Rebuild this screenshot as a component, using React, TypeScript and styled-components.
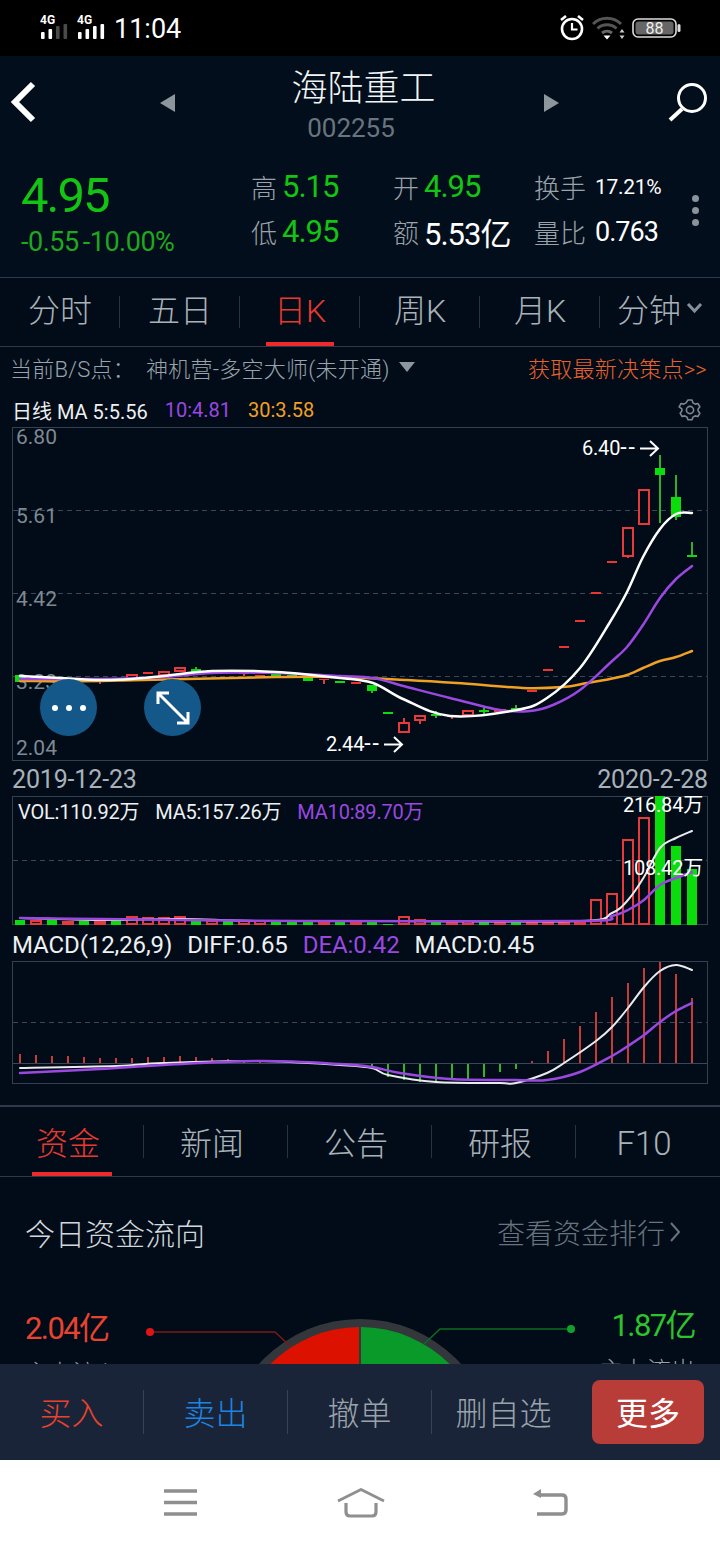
import React from 'react';
import styled, { createGlobalStyle } from 'styled-components';

const RED = '#e8392f';
const GREEN = '#14c414';
const PURPLE = '#9a48e0';
const ORANGE = '#f0a022';
const LINE = '#2e3a49';

const GlobalStyle = createGlobalStyle`
  html, body { margin: 0; padding: 0; background: #010c18; }
  * { box-sizing: border-box; }
  body { font-family: Roboto, "Noto Sans CJK SC", sans-serif; }
`;

const Page = styled.div`
  width: 720px;
  height: 1544px;
  display: flex;
  flex-direction: column;
  overflow: hidden;
  background: #010c18;
`;

/* status bar */
const StatusBar = styled.div`
  height: 56px;
  flex: none;
  background: #000;
  display: flex;
  align-items: center;
  justify-content: space-between;
  padding: 0 39px 0 40px;
  color: #fff;
`;
const StatusGroup = styled.div`
  display: flex;
  align-items: center;
  gap: 7px;
`;
const Clock = styled.span`
  font-size: 27px;
  padding-top: 1px;
`;

/* header */
const Header = styled.div`
  height: 86px;
  flex: none;
  display: flex;
  align-items: center;
  padding-top: 6px;
  background: #020e1b;
`;
const BackSlot = styled.div`
  width: 160px;
  padding-left: 9px;
  display: flex;
`;
const SearchSlot = styled.div`
  width: 160px;
  padding-right: 12px;
  display: flex;
  justify-content: flex-end;
`;
const TitleBlock = styled.div`
  flex: 1;
  display: flex;
  flex-direction: column;
  align-items: center;
  margin-top: 8px;
`;
const Title = styled.div`
  font-size: 36px;
  line-height: 44px;
  color: #f2f4f5;
  font-weight: 300;
  padding-left: 7px;
`;
const Code = styled.div`
  font-size: 26px;
  line-height: 34px;
  color: #69747f;
  padding-right: 18px;
`;
const PageArrow = styled.svg`
  margin-top: 2px;
`;

/* quote */
const Quote = styled.div`
  height: 136px;
  flex: none;
  display: flex;
  padding: 25px 0 0 21px;
  background: #020e1b;
  border-bottom: 1px solid ${LINE};
`;
const PriceCol = styled.div`
  width: 230px;
`;
const Price = styled.div`
  font-size: 49px;
  line-height: 58px;
  letter-spacing: -2px;
  color: ${GREEN};
`;
const Change = styled.div`
  font-size: 27px;
  line-height: 32px;
  margin-top: 1px;
  letter-spacing: -0.5px;
  color: #1fa81f;
  word-spacing: -2px;
`;
const StatGrid = styled.div`
  display: grid;
  grid-template-columns: 142px 141px 150px;
  grid-auto-rows: 45px;
  margin-top: -3px;
`;
const Stat = styled.div`
  display: flex;
  align-items: center;
  gap: ${p => p.$gap ?? 5}px;
  white-space: nowrap;
`;
const StatKey = styled.span`
  font-size: 26px;
  font-weight: 300;
  color: #9aa2aa;
`;
const StatValue = styled.span`
  font-size: ${p => p.$size ?? 31}px;
  color: ${p => p.$color ?? '#fff'};
  letter-spacing: ${p => p.$ls ?? -1}px;
`;
const Dots = styled.div`
  display: flex;
  flex-direction: column;
  gap: 5px;
  margin: 28px 0 0 8px;
`;
const Dot = styled.i`
  display: block;
  width: 7px;
  height: 7px;
  border-radius: 50%;
  background: #8a939c;
`;

/* tabs */
const Tabs = styled.div`
  height: ${p => p.$height}px;
  flex: none;
  display: flex;
  align-items: center;
  border-bottom: 1px solid ${LINE};
`;
const Tab = styled.div`
  position: relative;
  width: ${p => p.$width}px;
  height: 100%;
  display: flex;
  align-items: center;
  justify-content: center;
  gap: 5px;
  font-size: 32px;
  font-weight: 300;
  padding-bottom: ${p => p.$lift}px;
  padding-right: ${p => p.$shift ?? 0}px;
  color: ${p => (p.$active ? RED : '#a9b2b9')};
  &::before {
    content: '';
    display: ${p => (p.$last ? 'none' : 'block')};
    position: absolute;
    right: 0;
    top: 18px;
    bottom: 18px;
    width: 1px;
    background: #28333f;
  }
  &::after {
    content: '';
    display: ${p => (p.$active ? 'block' : 'none')};
    position: absolute;
    left: 50%;
    bottom: 0;
    width: ${p => p.$bar}px;
    height: 4px;
    margin-left: ${p => -p.$bar / 2}px;
    background: #ee2a2a;
  }
`;
const TabCode = styled.span`
  font-size: 33px;
  padding-top: 5px;
`;

/* b/s row */
const SignalRow = styled.div`
  height: 45px;
  flex: none;
  display: flex;
  align-items: center;
  padding: 0 13px 5px 10px;
  font-size: 22px;
  letter-spacing: 0.25px;
  font-weight: 300;
  color: #9aa3ab;
  white-space: nowrap;
`;
const SignalLabel = styled.span`
  width: 136px;
`;
const SignalArrow = styled.i`
  width: 0;
  height: 0;
  margin-left: 9px;
  border-left: 8px solid transparent;
  border-right: 8px solid transparent;
  border-top: 10px solid #8d969e;
`;
const SignalLink = styled.span`
  margin-left: auto;
  color: #e8622a;
`;

/* chart parts */
const ChartArea = styled.div`
  flex: none;
  padding: 0 12px;
`;
const Legend = styled.div`
  display: flex;
  align-items: center;
  height: ${p => p.$height}px;
  gap: ${p => p.$gap}px;
  padding-top: ${p => p.$pad ?? 0}px;
  font-size: ${p => p.$size}px;
  letter-spacing: ${p => p.$ls ?? 0}px;
  color: #eef0f2;
  white-space: nowrap;
`;
const LegendItem = styled.span`
  color: ${p => p.$color ?? 'inherit'};
`;
const Gear = styled.span`
  margin-left: auto;
  margin-right: 6px;
  display: flex;
`;
const Panel = styled.div`
  position: relative;
  height: ${p => p.$height}px;
  border: 1px solid #33404f;
  & > svg {
    display: block;
    width: 100%;
    height: 100%;
    overflow: visible;
  }
`;
const PanelLegend = styled(Legend)`
  position: absolute;
  left: 5px;
  top: 0;
`;
const Fab = styled.div`
  position: absolute;
  left: ${p => p.$left}px;
  top: 251px;
  width: 57px;
  height: 57px;
  border-radius: 50%;
  background: #14588a;
  display: flex;
  align-items: center;
  justify-content: center;
`;
const DateRow = styled.div`
  height: 35px;
  display: flex;
  align-items: center;
  justify-content: space-between;
  padding-top: 2px;
  font-size: 25px;
  letter-spacing: -0.15px;
  color: #a9b1b8;
`;

const SectionGap = styled.div`
  height: 23px;
  flex: none;
  border-bottom: 2px solid ${LINE};
`;

/* funds */
const Funds = styled.div`
  flex: 1;
  min-height: 0;
  overflow: hidden;
  padding: 0 25px;
`;
const FundsHead = styled.div`
  height: 113px;
  display: flex;
  align-items: center;
  justify-content: space-between;
  padding: 0 14px 4px 0;
`;
const FundsTitle = styled.div`
  font-size: 30px;
  font-weight: 300;
  color: #d3d8dc;
`;
const FundsLink = styled.div`
  display: flex;
  align-items: center;
  gap: 4px;
  font-size: 28px;
  font-weight: 300;
  color: #68737d;
`;
const FlowRow = styled.div`
  display: flex;
  justify-content: space-between;
`;
const FlowCol = styled.div`
  display: flex;
  flex-direction: column;
  align-items: ${p => p.$align};
  margin-top: ${p => p.$top}px;
`;
const FlowValue = styled.div`
  font-size: 31px;
  line-height: 40px;
  letter-spacing: -1.6px;
  color: ${p => p.$color};
`;
const FlowLabel = styled.div`
  font-size: 24px;
  font-weight: 300;
  color: #9aa3ab;
  margin-top: 5px;
`;
const Gauge = styled.svg`
  flex: none;
  display: block;
  margin-top: 4px;
`;

/* bottom bars */
const ActionBar = styled.div`
  height: 96px;
  flex: none;
  display: flex;
  align-items: center;
  background: #192438;
  padding-right: 16px;
`;
const Action = styled.div`
  width: 144px;
  height: 44px;
  display: flex;
  align-items: center;
  justify-content: center;
  padding-bottom: 3px;
  font-size: 32px;
  font-weight: 300;
  color: ${p => p.$color};
  border-right: 1px solid ${p => (p.$sep ? '#36445a' : 'transparent')};
`;
const MoreButton = styled.div`
  width: 112px;
  height: 64px;
  margin-left: auto;
  padding-bottom: 2px;
  border-radius: 8px;
  background: #b83c38;
  color: #fff;
  font-size: 32px;
  display: flex;
  align-items: center;
  justify-content: center;
`;
const NavBar = styled.div`
  height: 84px;
  flex: none;
  background: #fff;
  display: flex;
  align-items: center;
  gap: 139px;
  padding: 1px 0 0 164px;
`;
const NavBack = styled.svg`
  margin-left: 8px;
`;

/* data: page coordinates, candle x = 20 + 16 * index */
type Bar = [number, number, number, number?, number?];
const up: Bar[] = [
  [1, 677, 679], [3, 679, 680], [5, 680, 682, 680, 684], [7, 674, 679], [8, 672, 674],
  [9, 671, 676], [10, 667, 672], [12, 670, 671], [14, 673, 674, 673, 676], [15, 675, 676],
  [19, 679, 680, 679, 684], [21, 682, 684], [24, 722, 733, 718, 733], [25, 715, 721, 715, 724],
  [27, 715, 717, 715, 719], [28, 710, 716], [30, 709, 712], [32, 690, 692], [33, 669, 671],
  [34, 646, 648], [35, 620, 622], [36, 592, 594], [37, 561, 563], [38, 527, 557, 527, 558], [39, 489, 525],
];
const down: Bar[] = [
  [0, 675, 682], [2, 677, 679], [4, 679, 681], [6, 678, 680], [11, 669, 672, 667, 674],
  [13, 670, 672], [16, 674, 676, 674, 678], [17, 675, 677], [18, 678, 681], [20, 681, 683],
  [22, 685, 691, 685, 693], [23, 712, 714], [26, 714, 716, 711, 718], [29, 710, 712, 707, 714],
  [31, 708, 710, 705, 712], [40, 468, 475, 455, 523], [41, 497, 517, 475, 520], [42, 555, 557, 542, 557],
];

type Pt = [number, number];
const maWhite: Pt[] = [[20, 676], [60, 678], [100, 680], [132, 679], [164, 676], [212, 671], [276, 672], [340, 678], [373, 683], [403, 699], [450, 716], [517, 710], [547, 698], [580, 668], [610, 622], [627, 592], [643, 557], [660, 529], [676, 514], [692, 513]];
const maPurple: Pt[] = [[20, 679], [100, 679], [164, 677], [212, 673], [276, 673], [340, 676], [373, 678], [407, 687], [450, 698], [500, 710], [530, 711], [553, 705], [580, 690], [610, 663], [627, 647], [643, 625], [660, 598], [676, 579], [692, 566]];
const maOrange: Pt[] = [[20, 681], [100, 681], [276, 677], [340, 677], [407, 680], [457, 683], [523, 688], [563, 687], [587, 683], [610, 679], [627, 675], [643, 668], [660, 661], [676, 657], [692, 651]];

const volBars: [number, number, 'r' | 'g'][] = [
  [0, 5, 'g'], [1, 5, 'r'], [2, 5, 'g'], [3, 4, 'r'], [4, 4, 'g'], [5, 4, 'r'], [6, 4, 'g'], [7, 9, 'r'],
  [8, 8, 'r'], [9, 8, 'r'], [10, 9, 'r'], [11, 5, 'g'], [12, 5, 'r'], [13, 5, 'g'], [14, 5, 'r'], [15, 5, 'r'],
  [16, 4, 'g'], [17, 4, 'g'], [18, 4, 'g'], [19, 3, 'r'], [20, 3, 'g'], [21, 3, 'r'], [22, 4, 'g'], [23, 1, 'g'],
  [24, 9, 'r'], [25, 6, 'r'], [26, 4, 'g'], [27, 3, 'r'], [28, 5, 'r'], [29, 4, 'g'], [30, 4, 'r'], [31, 4, 'g'],
  [32, 4, 'r'], [33, 4, 'r'], [34, 4, 'r'], [35, 4, 'r'], [36, 26, 'r'], [37, 32, 'r'], [38, 86, 'r'], [39, 108, 'r'],
  [40, 129, 'g'], [41, 79, 'g'], [42, 56, 'g'],
];
const volWhite: Pt[] = [[20, 918], [100, 920], [180, 919], [260, 921], [400, 921], [580, 921], [612, 913], [628, 900], [644, 877], [660, 848], [676, 838], [692, 831]];
const volPurple: Pt[] = [[20, 918], [100, 919], [180, 920], [300, 921], [580, 921], [612, 916], [628, 910], [644, 900], [660, 885], [676, 878], [692, 872]];

const macdUp: [number, number][] = [
  [0, 1054], [1, 1055], [2, 1056], [3, 1056], [4, 1057], [5, 1058], [6, 1058], [7, 1058], [8, 1057], [9, 1057],
  [10, 1056], [11, 1057], [12, 1058], [13, 1059], [14, 1060], [15, 1061],
  [32, 1061], [33, 1051], [34, 1039], [35, 1026], [36, 1012], [37, 997], [38, 983], [39, 968], [40, 962], [41, 974], [42, 998],
];
const macdDown: [number, number][] = [
  [18, 1064], [19, 1065], [20, 1065], [21, 1066], [22, 1068], [23, 1077], [24, 1080], [25, 1082], [26, 1081],
  [27, 1080], [28, 1079], [29, 1077], [30, 1072], [31, 1069],
];
const macdWhite: Pt[] = [[20, 1068], [116, 1066], [163, 1063], [260, 1061], [340, 1065], [372, 1068], [388, 1075], [436, 1082], [500, 1083], [516, 1083], [547, 1073], [564, 1063], [596, 1041], [612, 1027], [628, 1008], [644, 987], [660, 971], [676, 965], [692, 970]];
const macdPurple: Pt[] = [[20, 1073], [100, 1069], [163, 1065], [260, 1061], [340, 1064], [372, 1067], [400, 1073], [450, 1079], [516, 1080], [547, 1080], [580, 1072], [612, 1056], [628, 1046], [644, 1035], [660, 1022], [676, 1011], [692, 1003]];

// catmull-rom through the points, the lines on the chart are smoothed
function smooth(pts: Pt[]) {
  let d = `M${pts[0][0]} ${pts[0][1]}`;
  for (let i = 0; i < pts.length - 1; i++) {
    const p0 = pts[Math.max(i - 1, 0)];
    const p1 = pts[i];
    const p2 = pts[i + 1];
    const p3 = pts[Math.min(i + 2, pts.length - 1)];
    const c1x = p1[0] + (p2[0] - p0[0]) / 6;
    const c1y = p1[1] + (p2[1] - p0[1]) / 6;
    const c2x = p2[0] - (p3[0] - p1[0]) / 6;
    const c2y = p2[1] - (p3[1] - p1[1]) / 6;
    d += ` C${c1x.toFixed(1)} ${c1y.toFixed(1)} ${c2x.toFixed(1)} ${c2y.toFixed(1)} ${p2[0]} ${p2[1]}`;
  }
  return d;
}

const xOf = (i: number) => 20 + 16 * i;

const Ma = ({ pts, color, w = 2.5 }: { pts: Pt[]; color: string; w?: number }) => (
  <path d={smooth(pts)} fill="none" stroke={color} strokeWidth={w} strokeLinecap="round" />
);

const Grid = ({ ys }: { ys: number[] }) => (
  <>
    {ys.map(y => (
      <line key={y} x1="13" x2="707" y1={y + 0.5} y2={y + 0.5} stroke="#3a4757" strokeDasharray="5 4" />
    ))}
  </>
);

const AxisText = styled.text`
  font-family: Roboto, sans-serif;
  font-size: 21px;
  fill: #7f8992;
`;
const MarkText = styled.text`
  font-family: Roboto, "Noto Sans CJK SC", sans-serif;
  font-size: 20px;
  letter-spacing: -0.2px;
  fill: #fff;
`;
const MarkDashes = styled.tspan`
  font-size: 23px;
  letter-spacing: 2px;
`;

const MainChart = () => (
  <svg viewBox="13 428 694 332">
    <Grid ys={[510, 593, 676]} />
    {[['6.80', 444], ['5.61', 523], ['4.42', 606], ['3.23', 689], ['2.04', 755]].map(([t, y]) => (
      <AxisText key={t} x="16" y={y}>{t}</AxisText>
    ))}
    {up.map(([i, t, b, wt, wb]) => {
      const x = xOf(i);
      const box = b - t > 2;
      return (
        <g key={i}>
          {wt !== undefined && <line x1={x} x2={x} y1={wt} y2={wb} stroke="#e03a3a" strokeWidth="2" />}
          {box
            ? <rect x={x - 5} y={t + 1} width="10" height={b - t - 2} fill="#010c18" stroke="#e9393a" strokeWidth="2" />
            : <rect x={x - 5} y={t} width="10" height={b - t} fill="#e33" />}
        </g>
      );
    })}
    {down.map(([i, t, b, wt, wb]) => {
      const x = xOf(i);
      return (
        <g key={i}>
          {wt !== undefined && <line x1={x} x2={x} y1={wt} y2={wb} stroke="#2fae2f" strokeWidth="2" />}
          <rect x={x - 5} y={t} width="10" height={b - t} fill="#0bdc0b" />
        </g>
      );
    })}
    <Ma pts={maOrange} color={ORANGE} />
    <Ma pts={maPurple} color={PURPLE} />
    <Ma pts={maWhite} color="#fff" />
    <MarkText x="582" y="455">6.40<MarkDashes>--</MarkDashes></MarkText>
    <path d="M640 448.5H658M650 441l8 7.500-8 7.500" fill="none" stroke="#fff" strokeWidth="2" />
    <MarkText x="326" y="751">2.44<MarkDashes>--</MarkDashes></MarkText>
    <path d="M384 744.5H402M394 737l8 7.500-8 7.500" fill="none" stroke="#fff" strokeWidth="2" />
  </svg>
);

const VolChart = () => (
  <svg viewBox="13 797 694 127">
    <Grid ys={[860]} />
    {volBars.map(([i, h, c]) => (
      c === 'g'
        ? <rect key={i} x={xOf(i) - 5} y={925 - h} width="10" height={h} fill="#0bdc0b" />
        : <rect key={i} x={xOf(i) - 5} y={925 - h + 1} width="10" height={h - 2} fill="#010c18" stroke="#e9393a" strokeWidth="2" />
    ))}
    <Ma pts={volWhite} color="#e8eaec" w={2} />
    <Ma pts={volPurple} color={PURPLE} />
    <MarkText x="703" y="812" textAnchor="end">216.84万</MarkText>
    <MarkText x="703" y="875" textAnchor="end">108.42万</MarkText>
  </svg>
);

const MacdChart = () => (
  <svg viewBox="13 962 694 121">
    <Grid ys={[1022]} />
    <line x1="13" x2="707" y1="1063.5" y2="1063.5" stroke="#3a4757" />
    {macdUp.map(([i, y]) => (
      <line key={i} x1={xOf(i)} x2={xOf(i)} y1={y} y2={1063} stroke="#c8393a" strokeWidth="2" />
    ))}
    {macdDown.map(([i, y]) => (
      <line key={i} x1={xOf(i)} x2={xOf(i)} y1={1064} y2={y} stroke="#2fb52f" strokeWidth="2" />
    ))}
    <Ma pts={macdWhite} color="#e8eaec" w={2} />
    <Ma pts={macdPurple} color={PURPLE} />
  </svg>
);

const SignalBars = ({ lit }: { lit: number }) => (
  <svg width="30" height="29" viewBox="0 0 30 29">
    <text x="0" y="10" fontSize="12" fontWeight="700" fontFamily="Roboto, sans-serif" fill="#fff">4G</text>
    {[0, 1, 2, 3].map(i => {
      const h = [7, 10, 13, 15][i];
      return <rect key={i} x={1 + i * 7.5} y={25 - h} width="3.6" height={h} rx="1" fill={i < lit ? '#fff' : '#4a4a4a'} />;
    })}
  </svg>
);

const Chevron = () => (
  <svg width="17" height="12" viewBox="0 0 17 12"><path d="M2 2l6.500 7L15 2" fill="none" stroke="#87909a" strokeWidth="3" /></svg>
);

export default function App() {
  const topTabs = ['分时', '五日', '日K', '周K', '月K', '分钟'];
  const infoTabs = ['资金', '新闻', '公告', '研报'];
  return (
    <Page>
      <GlobalStyle />
      <StatusBar>
        <StatusGroup>
          <SignalBars lit={2} />
          <SignalBars lit={4} />
          <Clock>11:04</Clock>
        </StatusGroup>
        <StatusGroup>
          <svg width="26" height="28" viewBox="0 0 26 28">
            <circle cx="13" cy="15" r="10" fill="none" stroke="#fff" strokeWidth="2.6" />
            <path d="M13 9v6.500h5.500" fill="none" stroke="#fff" strokeWidth="2.2" />
            <path d="M2 6l5-4M24 6l-5-4" stroke="#fff" strokeWidth="2.6" />
          </svg>
          <svg width="33" height="24" viewBox="0 0 33 24">
            <path d="M1 8a20 20 0 0 1 28 0" fill="none" stroke="#555" strokeWidth="3" />
            <path d="M5.500 12.500a14 14 0 0 1 19 0" fill="none" stroke="#555" strokeWidth="3" />
            <path d="M10 17a8 8 0 0 1 10 0" fill="none" stroke="#666" strokeWidth="3" />
            <path d="M11.500 19.500h7L15 23.500z" fill="#fff" />
            <path d="M30 13l2.500 3.500h-5zM30 23l2.500-3.500h-5z" fill="#ccc" />
          </svg>
          <svg width="49" height="20" viewBox="0 0 49 20">
            <rect x="1" y="1" width="43" height="18" rx="5" fill="none" stroke="#ddd" strokeWidth="1.6" />
            <rect x="3.500" y="3.500" width="38" height="13" rx="3" fill="#666" />
            <rect x="45.500" y="6" width="3" height="8" rx="1.500" fill="#ddd" />
            <text x="22.500" y="15.500" textAnchor="middle" fontSize="16" fontFamily="Roboto, sans-serif" fill="#eee">88</text>
          </svg>
        </StatusGroup>
      </StatusBar>

      <Header>
        <BackSlot>
          <svg width="28" height="44" viewBox="0 0 28 44">
            <path d="M24 4L6 22l18 18" fill="none" stroke="#fff" strokeWidth="6" />
          </svg>
        </BackSlot>
        <PageArrow width="16" height="18" viewBox="0 0 16 18"><path d="M15 0v18L0 9z" fill="#8e969d" /></PageArrow>
        <TitleBlock>
          <Title>海陆重工</Title>
          <Code>002255</Code>
        </TitleBlock>
        <PageArrow width="16" height="18" viewBox="0 0 16 18"><path d="M0 0v18l15-9z" fill="#8e969d" /></PageArrow>
        <SearchSlot>
          <svg width="40" height="40" viewBox="0 0 40 40">
            <circle cx="24" cy="16" r="13.500" fill="none" stroke="#fff" strokeWidth="3" />
            <path d="M14 27L2 38" stroke="#fff" strokeWidth="4" />
          </svg>
        </SearchSlot>
      </Header>

      <Quote>
        <PriceCol>
          <Price>4.95</Price>
          <Change>-0.55 -10.00%</Change>
        </PriceCol>
        <StatGrid>
          <Stat><StatKey>高</StatKey><StatValue $color={GREEN}>5.15</StatValue></Stat>
          <Stat><StatKey>开</StatKey><StatValue $color={GREEN}>4.95</StatValue></Stat>
          <Stat $gap={9}><StatKey>换手</StatKey><StatValue $size={21} $ls={-0.3}>17.21%</StatValue></Stat>
          <Stat><StatKey>低</StatKey><StatValue $color={GREEN}>4.95</StatValue></Stat>
          <Stat><StatKey>额</StatKey><StatValue>5.53亿</StatValue></Stat>
          <Stat $gap={9}><StatKey>量比</StatKey><StatValue $size={27} $ls={-1}>0.763</StatValue></Stat>
        </StatGrid>
        <Dots><Dot /><Dot /><Dot /></Dots>
      </Quote>

      <Tabs $height={69}>
        {topTabs.map((t, i) => (
          <Tab key={t} $width={120} $active={i === 2} $bar={68} $last={i === 5} $lift={8}>
            {t}
            {i === 5 && <Chevron />}
          </Tab>
        ))}
      </Tabs>

      <SignalRow>
        <SignalLabel>当前B/S点：</SignalLabel>
        <span>神机营-多空大师(未开通)</span>
        <SignalArrow />
        <SignalLink>获取最新决策点&gt;&gt;</SignalLink>
      </SignalRow>

      <ChartArea>
        <Legend $height={35} $gap={17} $size={20} $pad={1}>
          <LegendItem>日线 MA 5:5.56</LegendItem>
          <LegendItem $color={PURPLE}>10:4.81</LegendItem>
          <LegendItem $color={ORANGE}>30:3.58</LegendItem>
          <Gear>
            <svg width="24" height="24" viewBox="0 0 24 24" fill="none" stroke="#7d8791" strokeWidth="1.6" strokeLinejoin="round">
              <path d="M10 2h4l1 2.900 2.200 1.200 2.700-.6 2 3.300-1.800 2.100v2.200l1.800 2.100-2 3.300-2.700-.6-2.200 1.200-1 2.600h-4l-1-2.600-2.200-1.200-2.700.6-2-3.300 1.800-2.100v-2.200L1.100 8.800l2-3.300 2.700.6L8 4.900z" />
              <circle cx="12" cy="12" r="3.600" />
            </svg>
          </Gear>
        </Legend>
        <Panel $height={334}>
          <MainChart />
          <Fab $left={27}>
            <svg width="36" height="8" viewBox="0 0 36 8" fill="#fff">
              <circle cx="4" cy="4" r="3" /><circle cx="18" cy="4" r="3" /><circle cx="32" cy="4" r="3" />
            </svg>
          </Fab>
          <Fab $left={131}>
            <svg width="34" height="34" viewBox="0 0 34 34" fill="none" stroke="#fff" strokeWidth="3">
              <path d="M3 3l28 28M2 13V2h11M32 21v11H21" />
            </svg>
          </Fab>
        </Panel>
        <DateRow>
          <span>2019-12-23</span>
          <span>2020-2-28</span>
        </DateRow>
        <Panel $height={129}>
          <VolChart />
          <PanelLegend $height={26} $gap={16} $size={20} $ls={-0.2}>
            <LegendItem>VOL:110.92万</LegendItem>
            <LegendItem>MA5:157.26万</LegendItem>
            <LegendItem $color={PURPLE}>MA10:89.70万</LegendItem>
          </PanelLegend>
        </Panel>
        <Legend $height={36} $gap={15} $size={24} $pad={4} $ls={-0.1}>
          <LegendItem>MACD(12,26,9)</LegendItem>
          <LegendItem>DIFF:0.65</LegendItem>
          <LegendItem $color={PURPLE}>DEA:0.42</LegendItem>
          <LegendItem>MACD:0.45</LegendItem>
        </Legend>
        <Panel $height={123}>
          <MacdChart />
        </Panel>
      </ChartArea>

      <SectionGap />
      <Tabs $height={70}>
        {infoTabs.map((t, i) => (
          <Tab key={t} $width={144} $active={i === 0} $bar={80} $lift={2} $shift={8}>{t}</Tab>
        ))}
        <Tab $width={144} $bar={80} $lift={2} $shift={8} $last><TabCode>F10</TabCode></Tab>
      </Tabs>

      <Funds>
        <FundsHead>
          <FundsTitle>今日资金流向</FundsTitle>
          <FundsLink>
            查看资金排行
            <svg width="12" height="22" viewBox="0 0 12 22"><path d="M2 2l8 9-8 9" fill="none" stroke="#68737d" strokeWidth="2" /></svg>
          </FundsLink>
        </FundsHead>
        <FlowRow>
          <FlowCol $align="flex-start" $top={19}>
            <FlowValue $color="#e8432f">2.04亿</FlowValue>
            <FlowLabel>主力流入</FlowLabel>
          </FlowCol>
          <Gauge width="440" height="90" viewBox="140 1294 440 90">
            <circle cx="360" cy="1455" r="136" fill="#33363a" />
            <path d="M359 1327A127 127 0 0 0 233 1454H359z" fill="#dd1100" />
            <path d="M361 1327A127 127 0 0 1 487 1454H361z" fill="#0a9a2a" />
            <path d="M150 1332H275L290 1346" fill="none" stroke="#7a1a14" strokeWidth="1.500" />
            <circle cx="150" cy="1332" r="4" fill="#e01414" />
            <path d="M571 1329H440L424 1344" fill="none" stroke="#0e6a22" strokeWidth="1.500" />
            <circle cx="571" cy="1329" r="4" fill="#12a02c" />
          </Gauge>
          <FlowCol $align="flex-end" $top={16}>
            <FlowValue $color="#2ec22e">1.87亿</FlowValue>
            <FlowLabel>主力流出</FlowLabel>
          </FlowCol>
        </FlowRow>
      </Funds>

      <ActionBar>
        <Action $color="#e8432f" $sep>买入</Action>
        <Action $color="#1e84e0" $sep>卖出</Action>
        <Action $color="#9aa3ab" $sep>撤单</Action>
        <Action $color="#9aa3ab">删自选</Action>
        <MoreButton>更多</MoreButton>
      </ActionBar>

      <NavBar>
        <svg width="34" height="28" viewBox="0 0 34 28" stroke="#8f8f8f" strokeWidth="3.400">
          <path d="M0 2h33M0 13.500h33M0 25h33" />
        </svg>
        <svg width="48" height="30" viewBox="0 0 48 30" fill="none" stroke="#8f8f8f" strokeWidth="2.800">
          <path d="M1 13L24 1.500 47 13" />
          <path d="M9 15v9q0 4 4 4h22q4 0 4-4v-9" strokeWidth="3.200" />
        </svg>
        <NavBack width="36" height="28" viewBox="0 0 36 28" fill="none">
          <path d="M8 6h22q4 0 4 4v11q0 4-4 4H5" stroke="#8f8f8f" strokeWidth="3.400" />
          <path d="M9 0v9L1 5z" fill="#8f8f8f" />
        </NavBack>
      </NavBar>
    </Page>
  );
}
